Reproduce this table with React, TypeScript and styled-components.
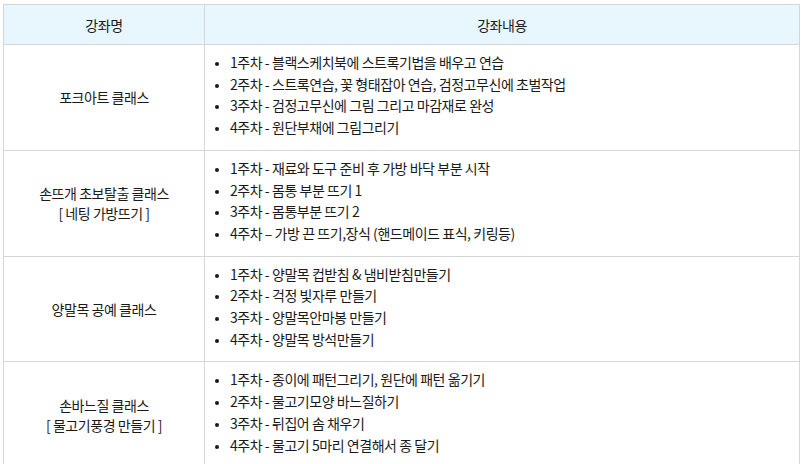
import React from 'react';
import styled, { createGlobalStyle } from 'styled-components';

const GlobalStyle = createGlobalStyle`
  body {
    margin: 0;
    background: #ffffff;
    font-family: "Noto Sans CJK KR", "Noto Sans", sans-serif;
    color: #1a1a1a;
  }
`;

const Page = styled.div`
  padding: 4px 3px;
`;

const Table = styled.table`
  width: 797px;
  border-collapse: collapse;
  table-layout: fixed;
  font-size: 14px;
  letter-spacing: -0.45px;
`;

const HeadCell = styled.th<{ $width?: number }>`
  width: ${(p) => (p.$width ? `${p.$width}px` : 'auto')};
  height: 39px;
  padding: 0;
  background: #e8f6fe;
  border: 1px solid #d6d6d6;
  font-weight: 400;
  text-align: center;
  vertical-align: middle;
`;

const NameCell = styled.td`
  border: 1px solid #d6d6d6;
  text-align: center;
  vertical-align: middle;
  line-height: 20px;
`;

const ContentCell = styled.td`
  border: 1px solid #d6d6d6;
  padding: 7px 10px 11px 0;
  vertical-align: top;
`;

const WeekList = styled.ul`
  margin: 0;
  padding-left: 25px;
  list-style: disc;
`;

const WeekItem = styled.li`
  line-height: 21.7px;
  &::marker {
    font-size: 11px;
  }
`;

type Course = { name: string; sub?: string; weeks: string[] };

const courses: Course[] = [
  {
    name: '포크아트 클래스',
    weeks: [
      '1주차 - 블랙스케치북에 스트록기법을 배우고 연습',
      '2주차 - 스트록연습, 꽃 형태잡아 연습, 검정고무신에 초벌작업',
      '3주차 - 검정고무신에 그림 그리고 마감재로 완성',
      '4주차 - 원단부채에 그림그리기',
    ],
  },
  {
    name: '손뜨개 초보탈출 클래스',
    sub: '[ 네팅 가방뜨기 ]',
    weeks: [
      '1주차 - 재료와 도구 준비 후 가방 바닥 부분 시작',
      '2주차 - 몸통 부분 뜨기 1',
      '3주차 - 몸통부분 뜨기 2',
      '4주차 – 가방 끈 뜨기,장식 (핸드메이드 표식, 키링등)',
    ],
  },
  {
    name: '양말목 공예 클래스',
    weeks: [
      '1주차 - 양말목 컵받침 & 냄비받침만들기',
      '2주차 - 걱정 빛자루 만들기',
      '3주차 - 양말목안마봉 만들기',
      '4주차 - 양말목 방석만들기',
    ],
  },
  {
    name: '손바느질 클래스',
    sub: '[ 물고기풍경 만들기 ]',
    weeks: [
      '1주차 - 종이에 패턴그리기, 원단에 패턴 옮기기',
      '2주차 - 물고기모양 바느질하기',
      '3주차 - 뒤집어 솜 채우기',
      '4주차 - 물고기 5마리 연결해서 종 달기',
    ],
  },
];

function App() {
  return (
    <Page>
      <GlobalStyle />
      <Table>
        <thead>
          <tr>
            <HeadCell $width={200}>강좌명</HeadCell>
            <HeadCell>강좌내용</HeadCell>
          </tr>
        </thead>
        <tbody>
          {courses.map((c) => (
            <tr key={c.name}>
              <NameCell>
                {c.name}
                {c.sub && (
                  <>
                    <br />
                    {c.sub}
                  </>
                )}
              </NameCell>
              <ContentCell>
                <WeekList>
                  {c.weeks.map((w) => (
                    <WeekItem key={w}>{w}</WeekItem>
                  ))}
                </WeekList>
              </ContentCell>
            </tr>
          ))}
        </tbody>
      </Table>
    </Page>
  );
}

export default App;
